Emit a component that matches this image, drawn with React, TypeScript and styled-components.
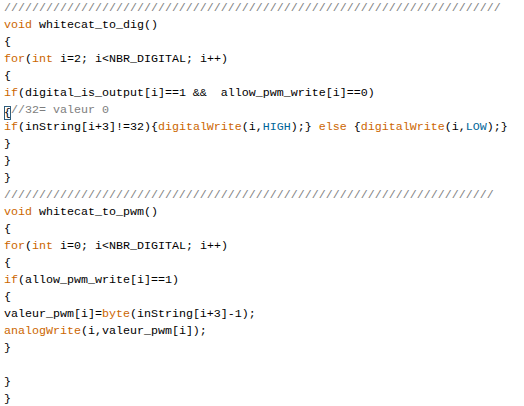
import React from "react";
import styled, { createGlobalStyle } from "styled-components";

const Global = createGlobalStyle`
  html, body { margin: 0; padding: 0; background: #ffffff; }
  #root { width: 524px; height: 406px; overflow: hidden; }
`;

const Editor = styled.pre`
  margin: 0;
  padding: 0 0 0 4px;
  font-family: "Liberation Mono", "Courier New", monospace;
  font-size: 11.67px;
  line-height: 17px;
  color: #000000;
  background: #ffffff;
  width: 524px;
  height: 406px;
  box-sizing: border-box;
`;

const Line = styled.div`
  height: 17px;
  white-space: pre;
`;

const Kw = styled.span`
  color: #cc6600;
`;

const Const = styled.span`
  color: #006699;
`;

const Comment = styled.span`
  color: #7e7e7e;
`;

const Match = styled.span`
  outline: 1px solid #2f5d7c;
  outline-offset: -1px;
  display: inline-block;
  height: 14px;
  line-height: 14px;
  vertical-align: -3px;
`;

export default function App() {
  return (
    <>
      <Global />
      <Editor>
        <Line><Comment>{"/".repeat(71)}</Comment></Line>
        <Line><Kw>void</Kw> whitecat_to_dig()</Line>
        <Line>{"{"}</Line>
        <Line><Kw>for</Kw>(<Kw>int</Kw> i=2; i&lt;NBR_DIGITAL; i++)</Line>
        <Line>{"{"}</Line>
        <Line><Kw>if</Kw>(digital_is_output[i]==1 &amp;&amp;  allow_pwm_write[i]==0)</Line>
        <Line><Match>{"{"}</Match><Comment>//32= valeur 0</Comment></Line>
        <Line><Kw>if</Kw>(inString[i+3]!=32){"{"}<Kw>digitalWrite</Kw>(i,<Const>HIGH</Const>);{"}"} <Kw>else</Kw> {"{"}<Kw>digitalWrite</Kw>(i,<Const>LOW</Const>);{"}"}</Line>
        <Line>{"}"}</Line>
        <Line>{"}"}</Line>
        <Line>{"}"}</Line>
        <Line><Comment>{"/".repeat(70)}</Comment></Line>
        <Line><Kw>void</Kw> whitecat_to_pwm()</Line>
        <Line>{"{"}</Line>
        <Line><Kw>for</Kw>(<Kw>int</Kw> i=0; i&lt;NBR_DIGITAL; i++)</Line>
        <Line>{"{"}</Line>
        <Line><Kw>if</Kw>(allow_pwm_write[i]==1)</Line>
        <Line>{"{"}</Line>
        <Line>valeur_pwm[i]=<Kw>byte</Kw>(inString[i+3]-1);</Line>
        <Line><Kw>analogWrite</Kw>(i,valeur_pwm[i]);</Line>
        <Line>{"}"}</Line>
        <Line>{" "}</Line>
        <Line>{"}"}</Line>
        <Line>{"}"}</Line>
      </Editor>
    </>
  );
}
